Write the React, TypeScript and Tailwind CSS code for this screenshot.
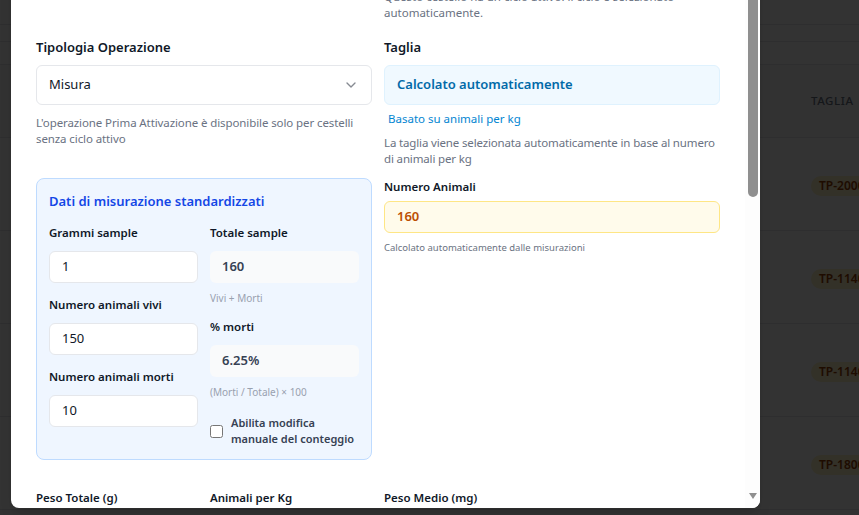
import React from 'react';
import { ChevronDown } from 'lucide-react';

const rows = ['TP-2000', 'TP-1140', 'TP-1140', 'TP-1800'];

const BackgroundPage: React.FC = () => (
  <div className="flex flex-col">
    <div className="h-[25px] border-b border-gray-200" />
    <div className="h-[17px] border-b border-gray-200" />
    <div className="h-[23px] border-b border-gray-200" />
    <div className="grid h-[73px] grid-cols-[811px_120px] items-center border-b border-gray-200 bg-gray-50">
      <div />
      <div className="text-[11.5px] font-medium uppercase tracking-wider text-gray-500">Taglia</div>
    </div>
    {rows.map((r, i) => (
      <div key={i} className="grid h-[93px] grid-cols-[811px_120px] items-center border-b border-gray-200">
        <div />
        <div>
          <span className="inline-block rounded-full bg-amber-100 px-2 py-0.5 text-xs font-semibold leading-4 text-amber-800">
            {r}
          </span>
        </div>
      </div>
    ))}
  </div>
);

const Field: React.FC<{ label: string; value: string }> = ({ label, value }) => (
  <div>
    <label className="mb-2 block text-[11.5px] font-semibold leading-5 text-gray-900">{label}</label>
    <div className="flex h-8 items-center rounded-md border border-gray-200 bg-white px-3 text-[13px] text-gray-900">
      {value}
    </div>
  </div>
);

const ReadOnly: React.FC<{ label: string; value: string; hint: string }> = ({ label, value, hint }) => (
  <div>
    <label className="mb-2 block text-[11.5px] font-semibold leading-5 text-gray-900">{label}</label>
    <div className="flex h-8 items-center rounded-md bg-gray-50 px-3 text-[13px] font-semibold text-gray-700">{value}</div>
    <p className="mt-2 text-[10px] leading-[14px] text-gray-400">{hint}</p>
  </div>
);

// scrollbar of the dialog body (scrolled to the top of a long form)
const Scrollbar: React.FC = () => (
  <div className="relative w-[15px] shrink-0 bg-[#fdfdfd]">
    <div className="absolute left-[3px] top-[17px] h-[357px] w-[10px] rounded-full bg-[#8f8f8f]" />
    <svg className="absolute bottom-[9px] left-[4px]" width="8" height="6" viewBox="0 0 8 6">
      <polygon points="0,0 8,0 4,6" fill="#8f8f8f" />
    </svg>
  </div>
);

const Dialog: React.FC = () => (
  <div className="absolute left-[11px] top-[-177px] flex h-[685px] w-[749px] overflow-hidden rounded-lg bg-white shadow-lg">
    <div className="min-w-0 flex-1 overflow-hidden px-[25px] pt-6 text-gray-900">
      {/* header */}
      <div className="mb-4">
        <h2 className="text-lg font-semibold leading-7">Registra operazione</h2>
        <p className="text-[13px] leading-5 text-gray-500">Inserisci i dati dell'operazione per il cestello selezionato</p>
      </div>

      {/* cestello / ciclo */}
      <div className="grid grid-cols-2 items-start gap-3">
        <div>
          <label className="mb-2 block text-[13px] font-semibold leading-5">Cestello</label>
          <div className="flex h-10 items-center justify-between rounded-md border border-gray-200 px-3 text-[13px]">
            Cestello #12 - FLUPSY 3
            <ChevronDown className="h-4 w-4 opacity-50" />
          </div>
        </div>
        <div>
          <label className="mb-2 block text-[13px] font-semibold leading-5">Ciclo</label>
          <div className="flex h-10 items-center rounded-md border border-gray-200 bg-gray-50 px-3 text-[13px]">Ciclo #45</div>
          <p className="mt-2.5 text-[11.5px] leading-4 text-gray-500">
            Questo cestello ha un ciclo attivo: il ciclo è selezionato automaticamente.
          </p>
        </div>
      </div>

      {/* tipologia / taglia */}
      <div className="mt-4 grid grid-cols-2 items-start gap-3">
        <div>
          <label className="mb-2 block text-[13px] font-semibold leading-5">Tipologia Operazione</label>
          <div className="flex h-10 items-center justify-between rounded-md border border-gray-200 bg-white px-3 text-[13px]">
            Misura
            <ChevronDown className="h-4 w-4 opacity-50" />
          </div>
          <p className="mt-2.5 text-[11.5px] leading-4 tracking-[-0.1px] text-gray-500">
            L'operazione Prima Attivazione è disponibile solo per cestelli senza ciclo attivo
          </p>

          <div className="mt-[31px] rounded-lg border border-blue-200 bg-blue-50 p-3">
            <h3 className="mb-3 text-[13px] font-semibold leading-5 text-blue-700">Dati di misurazione standardizzati</h3>
            <div className="grid grid-cols-2 items-start gap-3">
              <div className="space-y-3">
                <Field label="Grammi sample" value="1" />
                <Field label="Numero animali vivi" value="150" />
                <Field label="Numero animali morti" value="10" />
              </div>
              <div>
                <ReadOnly label="Totale sample" value="160" hint="Vivi + Morti" />
                <div className="mt-3">
                  <ReadOnly label="% morti" value="6.25%" hint="(Morti / Totale) × 100" />
                </div>
                <label className="mt-4 flex items-center gap-2 text-[11px] font-semibold leading-4 text-gray-700">
                  <input type="checkbox" className="h-[13px] w-[13px] shrink-0" />
                  <span>Abilita modifica manuale del conteggio</span>
                </label>
              </div>
            </div>
          </div>
        </div>

        <div>
          <label className="mb-2 block text-[13px] font-semibold leading-5">Taglia</label>
          <div className="flex h-10 items-center rounded-md border border-sky-100 bg-sky-50 px-3 text-[13px] font-semibold text-sky-700">
            Calcolato automaticamente
          </div>
          <p className="mt-1.5 px-1 text-[11.5px] leading-4 text-sky-600">Basato su animali per kg</p>
          <p className="mt-2 text-[11.5px] leading-4 tracking-[-0.15px] text-gray-500">
            La taglia viene selezionata automaticamente in base al numero di animali per kg
          </p>
          <label className="mt-2.5 mb-1 block text-[11.5px] font-semibold leading-5">Numero Animali</label>
          <div className="flex h-8 items-center rounded-md border border-amber-200 bg-amber-50 px-3 text-[13px] font-semibold text-amber-700">
            160
          </div>
          <p className="mt-2 text-[9.5px] leading-[14px] text-gray-500">Calcolato automaticamente dalle misurazioni</p>
        </div>
      </div>

      {/* pesi */}
      <div className="mt-7 grid grid-cols-4 gap-3">
        {['Peso Totale (g)', 'Animali per Kg', 'Peso Medio (mg)'].map((l) => (
          <div key={l}>
            <label className="mb-2 block text-[11.5px] font-semibold leading-5">{l}</label>
            <div className="flex h-10 items-center rounded-md border border-gray-200 bg-gray-50 px-3 text-[13px]">-</div>
          </div>
        ))}
      </div>
    </div>
    <Scrollbar />
  </div>
);

export default function App() {
  return (
    <div className="relative h-[515px] w-full overflow-hidden bg-white font-['Noto_Sans',sans-serif]">
      <BackgroundPage />
      <div className="absolute inset-0 bg-black/80" />
      <Dialog />
    </div>
  );
}
